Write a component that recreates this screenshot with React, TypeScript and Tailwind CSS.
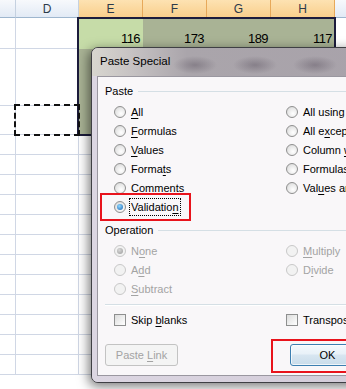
import React from "react";

const FONT = { fontFamily: '"Liberation Sans", Arial, sans-serif' };

function U({ children }: { children: React.ReactNode }) {
  return <span className="underline underline-offset-[2px]">{children}</span>;
}

function Radio({ checked, disabled }: { checked?: boolean; disabled?: boolean }) {
  return (
    <span
      className={
        "w-[12px] h-[12px] shrink-0 rounded-full border flex items-center justify-center " +
        (disabled
          ? "border-[#c8c8c8] bg-[#f2f2f2]"
          : "border-[#8f8f8f] bg-[radial-gradient(circle_at_60%_65%,#ffffff_0%,#e6e6e6_60%,#cfcfcf_100%)]")
      }
    >
      {checked && (
        <span
          className={
            "w-[6px] h-[6px] rounded-full " +
            (disabled
              ? "bg-[radial-gradient(circle_at_40%_35%,#d8d8d8,#9a9a9a)]"
              : "bg-[radial-gradient(circle_at_40%_35%,#8fd8ff,#1b64b4)]")
          }
        />
      )}
    </span>
  );
}

function Opt({
  children,
  checked,
  disabled,
  focus,
}: {
  children: React.ReactNode;
  checked?: boolean;
  disabled?: boolean;
  focus?: boolean;
}) {
  return (
    <div className="h-[19px] flex items-center whitespace-nowrap">
      <Radio checked={checked} disabled={disabled} />
      <span
        className={
          "ml-[5px] leading-[14px] " +
          (disabled ? "text-[#a3a3a3] " : "text-black ") +
          (focus ? "outline outline-1 outline-dotted outline-black outline-offset-[1px]" : "")
        }
      >
        {children}
      </span>
    </div>
  );
}

function Check({ children }: { children: React.ReactNode }) {
  return (
    <div className="h-[19px] flex items-center whitespace-nowrap">
      <span className="w-[12px] h-[12px] shrink-0 border border-[#8e8f8f] bg-[linear-gradient(135deg,#dcdcdc,#ffffff)]" />
      <span className="ml-[5px] leading-[14px] text-black">{children}</span>
    </div>
  );
}

function GroupHead({ label }: { label: string }) {
  return (
    <div className="h-[14px] flex items-center pl-[7px]">
      <span className="leading-[14px] text-black">{label}</span>
      <span className="flex-1 h-px bg-[#d5dfe5] ml-[5px] mt-[1px]" />
    </div>
  );
}

const COLS = ["D", "E", "F", "G", "H"];

export default function App() {
  const rowHeights = [31, 57, 29, 20, 20, 20, 20, 20, 20, 20, 20, 20, 20, 20, 20];
  const nums = ["116", "173", "189", "117"];
  return (
    <div className="relative w-[346px] h-[389px] overflow-hidden bg-white" style={FONT}>
      {/* spreadsheet */}
      <div className="flex flex-col">
        {/* header */}
        <div className="flex h-[18px] text-[12px]">
          <div className="w-[16px] h-full border-r border-b border-r-[#c5d1e0] border-b-[#9eb6ce] bg-[linear-gradient(to_bottom,#f7f9fc,#e2eaf5)]" />
          {COLS.map((c, i) => (
            <div
              key={c}
              className={
                "h-full border-r border-b flex items-center justify-center text-[#2b3a4a] " +
                (i === 0
                  ? "w-[63px] border-r-[#c5d1e0] border-b-[#9eb6ce] bg-[linear-gradient(to_bottom,#f7f9fc,#e2eaf5)]"
                  : "w-[64px] border-r-[#e7a95a] border-b-[#f0a848] bg-[linear-gradient(to_bottom,#fde2b2,#f9cf8c)]")
              }
            >
              {c}
            </div>
          ))}
          <div className="flex-1 h-full border-b border-b-[#9eb6ce] bg-[linear-gradient(to_bottom,#f7f9fc,#e2eaf5)]" />
        </div>
        {rowHeights.map((h, r) => (
          <div key={r} className="flex" style={{ height: h }}>
            <div className="w-[16px] h-full border-r border-b border-[#d0d7e5]" />
            <div className="w-[63px] h-full border-r border-b border-[#d0d7e5]" />
            {[0, 1, 2, 3].map((c) => (
              <div
                key={c}
                className={
                  "w-[64px] h-full flex items-end justify-end pr-[3px] pb-[3px] text-[13px] leading-[15px] tracking-[-0.6px] " +
                  (r < 3
                    ? r === 0 && c === 0
                      ? "bg-[#c6dca8]"
                      : "bg-[#a9b395]"
                    : "border-r border-b border-[#d0d7e5]")
                }
              >
                {r === 0 ? nums[c] : null}
              </div>
            ))}
            <div className="flex-1 h-full border-b border-[#d0d7e5]" />
          </div>
        ))}
      </div>

      {/* selection outline */}
      <div className="absolute left-[77px] top-[17px] w-[259px] h-[119px] border-2 border-[#1c1c3c]" />
      {/* marching ants */}
      <div className="absolute left-[14px] top-[104px] w-[66px] h-[32px] border-2 border-dashed border-[#111]" />

      {/* dialog */}
      <div className="absolute left-[91px] top-[47px] w-[300px] h-[336px] rounded-[7px] border border-[#3f3f44] bg-[#d8d2de] shadow-[-2px_3px_12px_rgba(0,0,0,0.55)] flex flex-col overflow-hidden text-[11px]">
        <div className="h-[28px] shrink-0 flex items-center pl-[8px] text-[11.5px] text-black bg-[radial-gradient(ellipse_22px_9px_at_103px_17px,rgba(70,60,75,0.35),transparent),radial-gradient(ellipse_22px_9px_at_163px_17px,rgba(70,60,75,0.35),transparent),radial-gradient(ellipse_22px_9px_at_223px_17px,rgba(70,60,75,0.35),transparent),linear-gradient(to_right,#d8d6cf_0px,#c6c2c3_40px,#aaa5ab_95px,#a8a2aa_100%)]">
          <span>Paste Special</span>
        </div>
        <div className="flex-1 px-[5px] pb-[6px] bg-[linear-gradient(to_right,#dcd6e2,#d2cbd8)]">
          <div className="relative h-full border border-[#9a97a0] bg-[#f9f7f9]">
            <div className="pt-[7px]">
              <GroupHead label="Paste" />
              <div className="mt-[4px] pl-[16px] grid grid-cols-[172px_1fr]">
                <div className="flex flex-col">
                  <Opt><U>A</U>ll</Opt>
                  <Opt><U>F</U>ormulas</Opt>
                  <Opt><U>V</U>alues</Opt>
                  <Opt>Forma<U>t</U>s</Opt>
                  <Opt><U>C</U>omments</Opt>
                  <Opt checked focus>Validatio<U>n</U></Opt>
                </div>
                <div className="flex flex-col">
                  <Opt>All using Source t<U>h</U>eme</Opt>
                  <Opt>All e<U>x</U>cept borders</Opt>
                  <Opt>Column <U>w</U>idths</Opt>
                  <Opt>Formulas and number fo<U>r</U>mats</Opt>
                  <Opt>Val<U>u</U>es and number formats</Opt>
                </div>
              </div>
              <div className="mt-[7px]">
                <GroupHead label="Operation" />
              </div>
              <div className="mt-[4px] pl-[16px] grid grid-cols-[172px_1fr]">
                <div className="flex flex-col">
                  <Opt checked disabled>N<U>o</U>ne</Opt>
                  <Opt disabled>A<U>d</U>d</Opt>
                  <Opt disabled><U>S</U>ubtract</Opt>
                </div>
                <div className="flex flex-col">
                  <Opt disabled><U>M</U>ultiply</Opt>
                  <Opt disabled>D<U>i</U>vide</Opt>
                </div>
              </div>
              <div className="mt-[6px] ml-[7px] h-px bg-[#d5dfe5]" />
              <div className="h-px ml-[7px] bg-white" />
              <div className="mt-[4px] pl-[16px] grid grid-cols-[172px_1fr]">
                <Check>Skip <U>b</U>lanks</Check>
                <Check>Transpos<U>e</U></Check>
              </div>
              <div className="mt-[15px] flex">
                <div className="ml-[7px] w-[73px] h-[22px] rounded-[3px] border border-[#c3c3c3] bg-[#f4f4f4] flex items-center justify-center text-[#a3a3a3]">
                  <span>Paste <U>L</U>ink</span>
                </div>
                <div className="ml-[112px] w-[75px] h-[22px] rounded-[3px] border border-[#3c7fb1] bg-[linear-gradient(to_bottom,#f4f9fd_0%,#e8f1f8_45%,#d8e6f1_50%,#c9dcea_100%)] flex items-center justify-center text-black shadow-[inset_0_0_0_1px_rgba(255,255,255,0.7)]">
                  <span>OK</span>
                </div>
              </div>
            </div>
            {/* red annotation boxes */}
            <div className="absolute left-[2px] top-[116px] w-[91px] h-[28px] border-2 border-[#e8131c]" />
            <div className="absolute left-[173px] top-[262px] w-[100px] h-[34px] border-2 border-[#e8131c]" />
          </div>
        </div>
      </div>
    </div>
  );
}
